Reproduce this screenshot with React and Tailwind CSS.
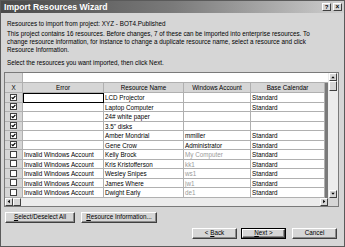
import React from "react";

const rows = [
    { checked: true, error: "", name: "LCD Projector", account: "", cal: "Standard", focus: true },
    { checked: true, error: "", name: "Laptop Computer", account: "", cal: "Standard" },
    { checked: true, error: "", name: "24# white paper", account: "", cal: "" },
    { checked: true, error: "", name: "3.5\" disks", account: "", cal: "" },
    { checked: true, error: "", name: "Amber Mondrial", account: "mmiller", cal: "Standard" },
    { checked: true, error: "", name: "Gene Crow", account: "Administrator", cal: "Standard" },
    { checked: false, error: "Invalid Windows Account", name: "Kelly Brock", account: "My Computer", cal: "Standard", dim: true },
    { checked: false, error: "Invalid Windows Account", name: "Kris Kristofferson", account: "kk1", cal: "Standard", dim: true },
    { checked: false, error: "Invalid Windows Account", name: "Wesley Snipes", account: "ws1", cal: "Standard", dim: true },
    { checked: false, error: "Invalid Windows Account", name: "James Where", account: "jw1", cal: "Standard", dim: true },
    { checked: false, error: "Invalid Windows Account", name: "Dwight Early", account: "de1", cal: "Standard", dim: true },
];

const Check = ({ on }) => (
    <svg width="7" height="7" viewBox="0 0 7 7">
        <rect x="0.5" y="0.5" width="6" height="6" fill="white" stroke="#404040" />
        {on && <path d="M1.6 3.3 L2.9 4.7 L5.4 1.9" fill="none" stroke="black" strokeWidth="1.2" />}
    </svg>
);

const Arrow = ({ dir }) => {
    const paths = {
        up: "M1.5 4.5 L3.5 2 L5.5 4.5 Z",
        down: "M1.5 2.5 L3.5 5 L5.5 2.5 Z",
        left: "M4.5 1.5 L2 3.5 L4.5 5.5 Z",
        right: "M2.5 1.5 L5 3.5 L2.5 5.5 Z",
    };
    return (
        <div className="w-[8px] h-[8px] bg-[#d6d6d6] border border-t-white border-l-white border-r-[#404040] border-b-[#404040] flex items-center justify-center">
            <svg width="7" height="7" viewBox="0 0 7 7">
                <path d={paths[dir]} fill="black" />
            </svg>
        </div>
    );
};

const Btn = ({ children, className = "", strong }) => (
    <div className={`${strong ? "border border-black" : ""} ${className}`}>
        <div className="h-full bg-[#d6d6d6] border border-t-white border-l-white border-r-[#404040] border-b-[#404040] shadow-[inset_-1px_-1px_0_#8a8a8a] flex items-center justify-center text-black">
            {children}
        </div>
    </div>
);

const cell = "border-r border-b border-[#b0b0b0] px-[1px] truncate leading-[9px]";

export default function App() {
    return (
        <div
            className="w-[345px] h-[247px] bg-[#d6d6d6] border border-[#5a5a5a] text-[6.3px] text-black overflow-hidden"
            style={{ fontFamily: "'Liberation Sans', Arial, sans-serif" }}
        >
            <div className="h-[12px] bg-gradient-to-r from-[#4a4a4a] via-[#7a7a7a] to-[#cfcfcf] flex items-center pl-[3px] pr-[2px]">
                <span className="text-white font-bold text-[8.6px] leading-none">Import Resources Wizard</span>
                <div className="ml-auto flex gap-[2px]">
                    <div className="w-[9px] h-[8px] bg-[#d6d6d6] border border-t-white border-l-white border-r-[#404040] border-b-[#404040] flex items-center justify-center font-bold text-[6px] leading-none">?</div>
                    <div className="w-[9px] h-[8px] bg-[#d6d6d6] border border-t-white border-l-white border-r-[#404040] border-b-[#404040] flex items-center justify-center font-bold text-[6.5px] leading-none">×</div>
                </div>
            </div>

            <div className="pl-[6px] pt-[7px] leading-[8px] whitespace-nowrap">
                <p>Resources to import from project: XYZ - BOT4.Published</p>
                <p className="mt-[2px]">
                    This project contains 16 resources. Before changes, 7 of these can be imported into enterprise resources. To
                    <br />
                    change resource information, for instance to change a duplicate resource name, select a resource and click
                    <br />
                    Resource Information.
                </p>
                <p className="mt-[5px]">Select the resources you want imported, then click Next.</p>
            </div>

            <div className="mx-[3px] mt-[5px] w-[335px] border border-[#7a7a7a] bg-white">
                <div className="flex">
                    <div className="w-[323px]">
                        <div className="flex h-[10px] border-b border-[#b0b0b0]">
                            <div className="w-[18px] bg-[#d6d6d6] border-r border-[#b0b0b0]" />
                            <div className="flex-1 bg-white" />
                        </div>
                        <div className="flex">
                            <div className="w-[320px]">
                                <div className="flex h-[10px] bg-[#d6d6d6] text-center">
                                    <div className={`${cell} w-[18px]`}>X</div>
                                    <div className={`${cell} w-[81px]`}>Error</div>
                                    <div className={`${cell} w-[80px]`}>Resource Name</div>
                                    <div className={`${cell} w-[67px]`}>Windows Account</div>
                                    <div className={`${cell} w-[74px]`}>Base Calendar</div>
                                </div>
                                {rows.map((r, i) => (
                                    <div key={i} className="flex h-[9.5px]">
                                        <div className={`${cell} w-[18px] bg-[#d6d6d6] flex items-center justify-center`}>
                                            <Check on={r.checked} />
                                        </div>
                                        <div className={`${cell} w-[81px] ${r.focus ? "border-[1.5px] border-black" : ""}`}>{r.error}</div>
                                        <div className={`${cell} w-[80px]`}>{r.name}</div>
                                        <div className={`${cell} w-[67px] ${r.dim ? "text-[#9a9a9a]" : ""}`}>{r.account}</div>
                                        <div className={`${cell} w-[74px]`}>{r.cal}</div>
                                    </div>
                                ))}
                            </div>
                            <div className="w-[3px] bg-[#7a7a7a]" />
                        </div>
                    </div>
                    <div className="w-[10px] bg-[#ececec] flex flex-col items-center">
                        <Arrow dir="up" />
                        <div className="w-[8px] h-[10px] bg-[#d6d6d6] border border-t-white border-l-white border-r-[#404040] border-b-[#404040]" />
                        <div className="flex-1" />
                        <Arrow dir="down" />
                    </div>
                </div>
                <div className="flex h-[8px] bg-[#ececec]">
                    <Arrow dir="left" />
                    <div className="w-[8px] h-[8px] bg-[#d6d6d6] border border-t-white border-l-white border-r-[#404040] border-b-[#404040]" />
                    <div className="flex-1" />
                    <Arrow dir="right" />
                    <div className="w-[10px] bg-[#d6d6d6]" />
                </div>
            </div>

            <div className="flex gap-[6px] px-[4px] mt-[5px]">
                <Btn className="w-[70px] h-[11px]">
                    <span><u>S</u>elect/Deselect All</span>
                </Btn>
                <Btn className="w-[76px] h-[11px]">
                    <span><u>R</u>esource Information...</span>
                </Btn>
            </div>

            <div className="flex justify-end gap-[4px] pr-[7px] mt-[5px]">
                <Btn className="w-[45px] h-[11px]">
                    <span>&lt; <u>B</u>ack</span>
                </Btn>
                <Btn strong className="w-[45px] h-[11px]">
                    <span><u>N</u>ext &gt;</span>
                </Btn>
                <Btn className="w-[45px] h-[11px] ml-[2px]">
                    <span>Cancel</span>
                </Btn>
            </div>
        </div>
    );
}
